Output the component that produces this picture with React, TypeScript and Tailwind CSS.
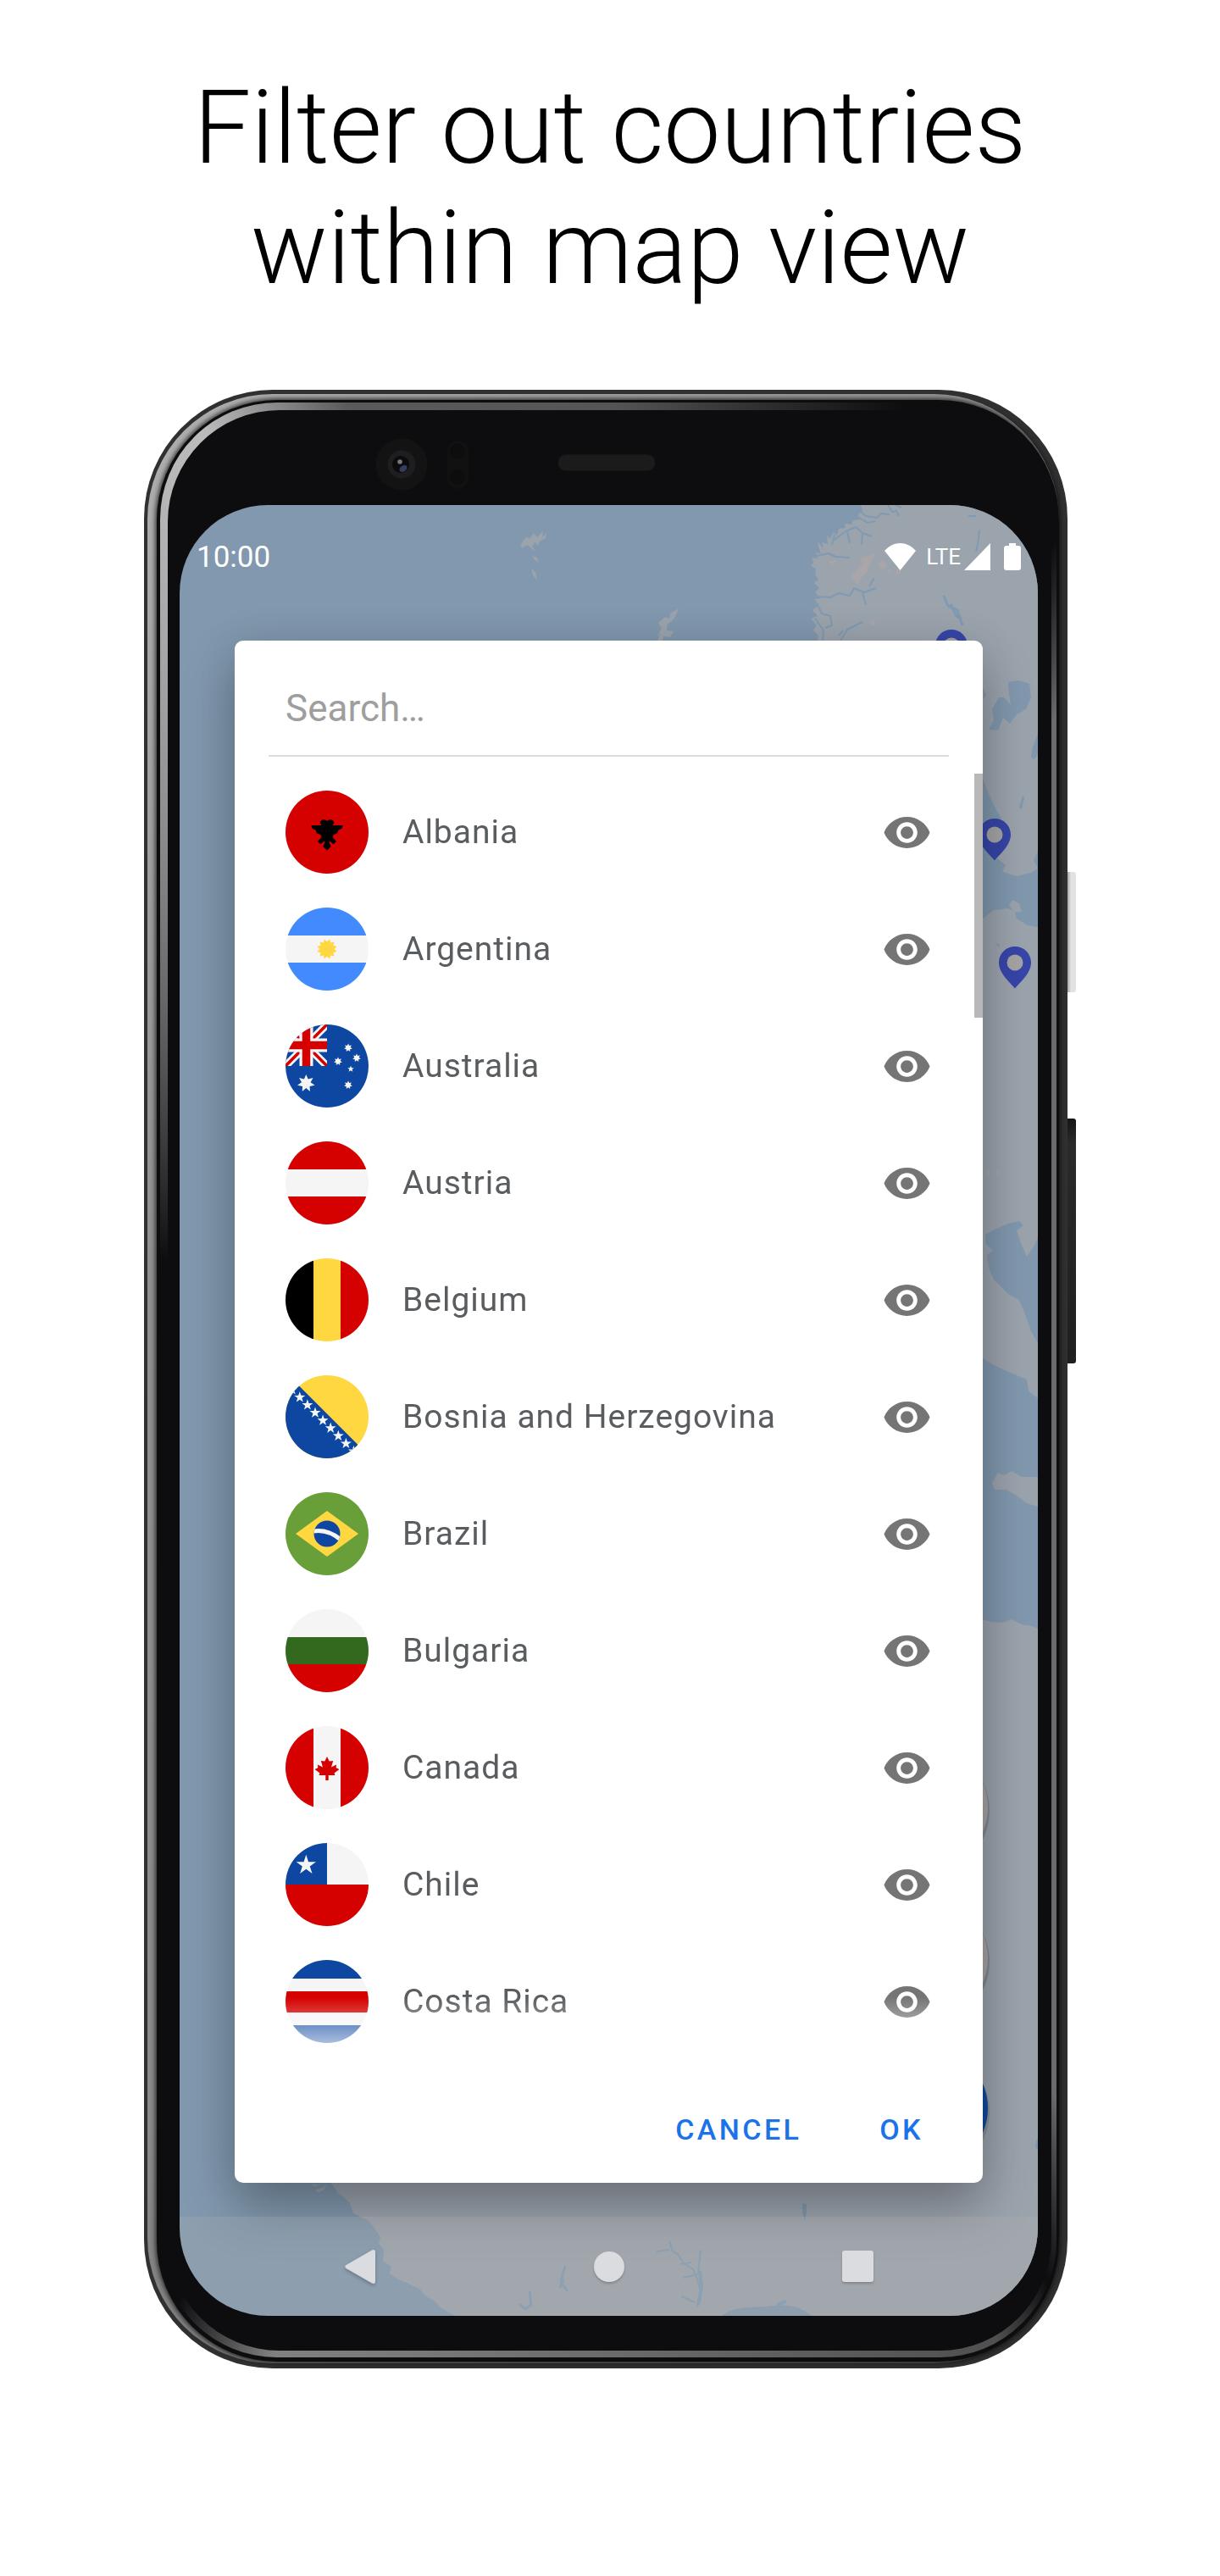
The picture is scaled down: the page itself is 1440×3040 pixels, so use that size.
import { useState, type ReactNode } from 'react';
import { MdVisibility, MdVisibilityOff } from 'react-icons/md';

const RED = '#d50000';
const WHITE = '#f5f5f5';
const BLUE = '#0d47a1';
const YELLOW = '#ffd740';

function starPoints(cx: number, cy: number, r: number, n = 5, inner = 0.4, turn = 0) {
  const pts: string[] = [];
  for (let i = 0; i < n * 2; i++) {
    const rad = i % 2 === 0 ? r : r * inner;
    const a = -Math.PI / 2 + turn + (Math.PI * i) / n;
    pts.push(`${(cx + rad * Math.cos(a)).toFixed(2)},${(cy + rad * Math.sin(a)).toFixed(2)}`);
  }
  return pts.join(' ');
}

function Flag({ children }: { children: ReactNode }) {
  return (
    <svg viewBox="0 0 98 98" aria-hidden="true" className="size-[98px] shrink-0 rounded-full">
      {children}
    </svg>
  );
}

function Rows({ parts }: { parts: [string, number, number][] }) {
  return (
    <>
      {parts.map(([fill, from, to], i) => (
        <rect key={i} x="0" y={from} width="98" height={to - from} fill={fill} />
      ))}
    </>
  );
}

function Columns({ parts }: { parts: [string, number, number][] }) {
  return (
    <>
      {parts.map(([fill, from, to], i) => (
        <rect key={i} x={from} y="0" width={to - from} height="98" fill={fill} />
      ))}
    </>
  );
}

const countries: { name: string; flag: ReactNode }[] = [
  {
    name: 'Albania',
    flag: (
      <>
        <rect width="98" height="98" fill={RED} />
        <path d="M49 36C47 33.500 43 33.500 41.500 36C40.500 38 41 39.500 42.500 41H30.500L31 44L33 45.500L35.500 46.500L37 50.500L41.500 52L42.500 55L38 60L41.300 63.300L46 59.500L46.500 61L44.300 66L49 70.500L53.700 66L51.500 61L52 59.500L56.700 63.300L60 60L55.500 55L56.500 52L61 50.500L62.500 46.500L65 45.500L67 44L67.500 41H55.500C57 39.500 57.500 38 56.500 36C55 33.500 51 33.500 49 36Z" />
      </>
    ),
  },
  {
    name: 'Argentina',
    flag: (
      <>
        <Rows parts={[['#448aff', 0, 33], [WHITE, 33, 65], ['#448aff', 65, 98]]} />
        <polygon points={starPoints(49, 49, 12, 12, 0.72, Math.PI / 12)} fill={YELLOW} />
      </>
    ),
  },
  {
    name: 'Australia',
    flag: (
      <>
        <rect width="98" height="98" fill={BLUE} />
        <clipPath id="canton">
          <rect width="49" height="49" />
        </clipPath>
        <g clipPath="url(#canton)">
          <path d="M0 0L49 49M49 0L0 49" stroke={WHITE} strokeWidth="9" />
          <path d="M0 0L49 49M49 0L0 49" stroke={RED} strokeWidth="3.500" />
          <path d="M24.500 0V49M0 24.500H49" stroke={WHITE} strokeWidth="16" />
          <path d="M24.500 0V49M0 24.500H49" stroke={RED} strokeWidth="9.500" />
        </g>
        <g fill={WHITE}>
          <polygon points={starPoints(24.3, 69.5, 10.5, 7, 0.52)} />
          <polygon points={starPoints(74, 27.5, 5, 7, 0.55)} />
          <polygon points={starPoints(84, 39.5, 5, 7, 0.55)} />
          <polygon points={starPoints(62, 43.5, 5, 7, 0.55)} />
          <polygon points={starPoints(77, 52.5, 4, 5, 0.42)} />
          <polygon points={starPoints(74, 71.5, 5, 7, 0.55)} />
        </g>
      </>
    ),
  },
  { name: 'Austria', flag: <Rows parts={[[RED, 0, 33], [WHITE, 33, 65], [RED, 65, 98]]} /> },
  { name: 'Belgium', flag: <Columns parts={[['#000', 0, 33], [YELLOW, 33, 65], [RED, 65, 98]]} /> },
  {
    name: 'Bosnia and Herzegovina',
    flag: (
      <>
        <rect width="98" height="98" fill={YELLOW} />
        <path d="M0 -3.500L98 94.500V98H0Z" fill={BLUE} />
        {[-1, 0, 1, 2, 3, 4, 5, 6, 7].map((i) => (
          <polygon key={i} points={starPoints(16.8 + i * 9.1, 26 + i * 9.1, 6.8)} fill={WHITE} />
        ))}
      </>
    ),
  },
  {
    name: 'Brazil',
    flag: (
      <>
        <rect width="98" height="98" fill="#689f38" />
        <path d="M12 49L49 22L86 49L49 76Z" fill={YELLOW} />
        <clipPath id="globe">
          <circle cx="49" cy="49" r="15.5" />
        </clipPath>
        <circle cx="49" cy="49" r="15.5" fill={BLUE} />
        <path d="M30 46.500C44 43.500 55 47 66 57" stroke={WHITE} strokeWidth="5" fill="none" clipPath="url(#globe)" />
      </>
    ),
  },
  { name: 'Bulgaria', flag: <Rows parts={[[WHITE, 0, 33], ['#33691e', 33, 65], [RED, 65, 98]]} /> },
  {
    name: 'Canada',
    flag: (
      <>
        <Columns parts={[[RED, 0, 33], [WHITE, 33, 65], [RED, 65, 98]]} />
        <path
          d="M49 36L46.300 41.500L41.800 41L44 48.500L38 45.500L38.300 49.300L34.500 51L40.500 55.500L39.500 58H47.300V64H50.700V58H58.500L57.500 55.500L63.500 51L59.700 49.300L60 45.500L54 48.500L56.200 41L51.700 41.500Z"
          fill={RED}
        />
      </>
    ),
  },
  {
    name: 'Chile',
    flag: (
      <>
        <rect width="98" height="49" fill={WHITE} />
        <rect width="49" height="49" fill={BLUE} />
        <rect y="49" width="98" height="49" fill={RED} />
        <polygon points={starPoints(24.3, 26, 12.3, 5, 0.38)} fill={WHITE} />
      </>
    ),
  },
  {
    name: 'Costa Rica',
    flag: <Rows parts={[[BLUE, 0, 22], [WHITE, 22, 37], [RED, 37, 62], [WHITE, 62, 77], [BLUE, 77, 98]]} />,
  },
];

function Pin({ x, y }: { x: number; y: number }) {
  return (
    <g transform={`translate(${x} ${y})`}>
      <path d="M0 0C-10.500 0 -19 8 -19 19C-19 32 -5 43 0 49.500C5 43 19 32 19 19C19 8 10.500 0 0 0Z" fill="#3746a8" />
      <circle cy="19" r="9.5" fill="#a5a5a5" />
    </g>
  );
}

/* Dimmed map of Europe and the northern coast of Africa. */
function MapBackground() {
  return (
    <svg
      viewBox="212 596 1013 2137"
      preserveAspectRatio="xMidYMid slice"
      aria-hidden="true"
      className="absolute inset-0 size-full"
    >
      <rect x="212" y="596" width="1013" height="2137" fill="#8198ae" />
      <g fill="#9ba3ad">
        <path d="M1016 596L1018 602L1013 607L1014 613L1007 614L1005 619L997 618L998 623L990 624L988 631L983 628L980 636L976 632L977 642L970 640L972 648L965 638L966 646L969 653L963 652L965 659L958 658L960 664L957 668L963 671L962 678L966 684L961 688L967 694L962 699L968 706L961 707L967 714L959 720L965 727L957 730L964 738L960 744L966 750L961 770V1605L1160 1603L1175 1612L1190 1619L1212 1628L1214 1642L1225 1650V596Z" />
        <path d="M1171 1750L1178 1738L1185 1741L1194 1736L1206 1743L1225 1743V1778L1212 1774L1200 1765L1187 1758L1174 1758Z" />
        <path d="M1159 1911L1170 1914L1183 1915L1194 1911L1206 1917L1218 1919L1225 1922V2733H537L521 2724L512 2715L503 2710L495 2701L480 2694L470 2690L460 2683L462 2675L452 2668L453 2655L447 2648L449 2640L441 2628L434 2620L417 2612L413 2600L405 2592L399 2588L392 2578L388 2572L600 2300L900 2000Z" />
        <path d="M614 643L621 634L626 635L630 629L634 634L641 626L640 634L645 629L644 635L637 639L635 644L631 640L628 645L634 653L627 647L622 643L616 647Z" />
        <path d="M628 656L634 658L636 664L631 661Z" />
        <path d="M627 671L632 675L634 684L629 679Z" />
        <path d="M777 735L785 728L790 730L791 724L801 718L797 728L793 733L788 736L787 744L795 745L791 752L783 751L782 757H776L779 748L775 751L781 742Z" />
        <path d="M372 2584L381 2582L385 2578L383 2584L375 2588ZM368 2577L378 2579L370 2580Z" />
      </g>
      {/* Inland water */}
      <g fill="#8198ae">
        <path d="M1190 805L1202 803L1215 807L1217 823L1211 837L1200 843L1192 854L1184 847L1178 862L1167 861L1173 850L1171 837L1179 823L1185 823L1193 832L1191 818Z" />
        <path d="M1225 865L1219 883L1220 897L1225 890ZM1160 812L1164 820L1161 826Z" />
        <path d="M1219 880L1217 893L1220 896L1223 885Z" />
        <path d="M1160 919L1168 939L1177 958L1182 966L1178 1000L1176 1012L1187 1021L1183 1029L1200 1034L1216 1030L1225 1025V1094L1213 1092L1200 1084L1198 1076L1190 1072L1173 1074L1160 1084Z" />
        <path d="M1203 953L1207 939L1209 941L1206 955ZM1225 1004L1220 1015L1225 1025ZM1174 1113L1179 1114L1180 1118Z" />
        <path d="M1163 1457L1174 1451L1190 1444L1203 1441L1208 1446L1200 1452L1205 1467L1212 1483L1220 1471L1225 1460V1585L1217 1571L1210 1551L1203 1534L1190 1527L1173 1510L1167 1496L1165 1481L1172 1476L1163 1467Z" />
        <path d="M852 2733C865 2722 885 2723 905 2722C930 2718 945 2722 958 2733Z" />
        <path d="M947 2600L952 2601L952 2612L950 2621L947 2612Z" />
        <path d="M1223 2526L1225 2524V2537L1222 2534Z" />
      </g>
      <g fill="none" stroke="#7f9ab3" strokeWidth="2" strokeLinejoin="round">
        <path d="M1015 603L1022 609L1035 611L1040 606L1050 607M1014 611L1024 617L1033 615M1048 596L1053 604L1058 603L1061 609M1057 596L1064 599" />
        <path d="M985 637L998 627L1010 622L1018 629L1017 643M1018 629L1029 633M1003 641L1000 627M985 631L982 643" />
        <path d="M964 656L978 653L986 657L1003 658M964 704L980 705L990 700L1003 703L1008 694L1020 699L1034 694M1018 699L1022 714M1026 692L1032 682" />
        <path d="M965 714L970 724L980 727L982 738L974 741M962 730L972 744L971 756M992 756L1000 743L1010 738L1018 734M995 744L990 750" />
        <path d="M1156 626L1154 643L1152 651M1143 609L1152 609" />
        <path d="M1114 703L1119 715L1130 720L1136 738M1122 713L1129 727L1134 730" strokeWidth="3" />
        <path d="M667 2674L662 2693L670 2704M665 2690L661 2700M625 2704L627 2720L620 2725L613 2719" strokeWidth="3" />
        <path d="M790 2645L794 2657L800 2660L807 2671L818 2678L823 2690L826 2700L827 2713L823 2722M775 2657L790 2655M827 2655L824 2685M803 2672L816 2670M804 2710L820 2717M806 2688L824 2684" strokeWidth="2" />
        <path d="M826 2680L828 2700L824 2720M917 2720L928 2716" strokeWidth="4" />
        <path d="M1160 1000L1178 995M1160 1006L1172 1008" strokeWidth="3" />
      </g>
      <g fill="#a9a5a8">
        <path d="M1010 674L1018 665L1015 659L1024 656L1032 652L1030 660L1026 666L1024 674L1018 680L1012 690L1008 684L1004 680ZM978 663L988 660L984 667ZM1035 666L1042 662L1048 666L1043 672Z" />
        <circle cx="1060" cy="675" r="3" />
        <circle cx="1050" cy="674" r="2" />
        <circle cx="1030" cy="735" r="3" />
        <circle cx="1167" cy="1384" r="2" />
        <circle cx="1178" cy="1384" r="2" />
        <path d="M1191 1068L1195 1062L1203 1066L1206 1076L1197 1077Z" fill="#9ba3ad" />
      </g>
      <g>
        <circle cx="1093" cy="2137" r="75" fill="#000" opacity="0.15" />
        <circle cx="1093" cy="2133" r="73" fill="#a8a5a4" />
        <circle cx="1093" cy="2315" r="75" fill="#000" opacity="0.15" />
        <circle cx="1093" cy="2311" r="73" fill="#a8a5a4" />
        <circle cx="1093" cy="2492" r="75" fill="#000" opacity="0.12" />
        <circle cx="1093" cy="2488" r="73" fill="#104b9b" />
      </g>
      <Pin x={1123} y={743} />
      <Pin x={1174} y={966} />
      <Pin x={1198} y={1117} />
    </svg>
  );
}

function StatusBar() {
  return (
    <div className="relative flex h-[160px] items-start justify-between px-5 pt-[37px] text-white">
      <span className="text-[35px] leading-[50px]">10:00</span>
      <div className="flex h-12 items-center">
        <svg viewBox="0 0 37 32" className="mr-3 h-8 w-[37px]" fill="currentColor" aria-label="Wi-Fi">
          <path d="M0 9C11 -3 26 -3 37 9L18.500 32Z" />
        </svg>
        <span className="mr-1 text-[26px] leading-[48px]">LTE</span>
        <svg viewBox="0 0 31 32" className="mr-4 h-8 w-[31px]" fill="currentColor" aria-label="Signal">
          <path d="M31 0V32H0Z" />
        </svg>
        <svg viewBox="0 0 20 32" className="h-8 w-5" fill="currentColor" aria-label="Battery">
          <path d="M6 0H14V3H17Q20 3 20 6V29Q20 32 17 32H3Q0 32 0 29V6Q0 3 3 3H6Z" />
        </svg>
      </div>
    </div>
  );
}

function CountryDialog() {
  const [query, setQuery] = useState('');
  const [hidden, setHidden] = useState<string[]>([]);
  const shown = countries.filter((c) => c.name.toLowerCase().includes(query.toLowerCase()));
  const toggle = (name: string) =>
    setHidden((list) => (list.includes(name) ? list.filter((n) => n !== name) : [...list, name]));

  return (
    <section
      role="dialog"
      aria-label="Countries"
      className="relative mx-[65px] flex flex-col overflow-clip rounded-[10px] bg-white shadow-[0_30px_60px_rgba(0,0,0,0.28),0_0_50px_rgba(0,0,0,0.08)]"
    >
      <div className="mx-10 border-b-2 border-[#dcdcdc] px-5 pt-[52px] pb-[27px]">
        <input
          type="text"
          aria-label="Search countries"
          placeholder="Search…"
          value={query}
          onChange={(e) => setQuery(e.target.value)}
          className="block h-14 w-full bg-transparent text-[44px] leading-[56px] text-[#5f6368] outline-none placeholder:text-[#9e9e9e]"
        />
      </div>

      <div className="relative mt-5 h-[1528px]">
        <ul className="h-full overflow-hidden [mask-image:linear-gradient(to_bottom,black_calc(100%_-_84px),transparent)]">
          {shown.map(({ name, flag }) => (
            <li key={name} className="flex h-[138px] items-center gap-10 px-[60px]">
              <Flag>{flag}</Flag>
              <span className="grow text-[39px] leading-[50px] tracking-wide text-[#5a5d60]">{name}</span>
              <button
                type="button"
                aria-label={`Show ${name}`}
                aria-pressed={!hidden.includes(name)}
                onClick={() => toggle(name)}
                className="text-[#757575]"
              >
                {hidden.includes(name) ? (
                  <MdVisibilityOff className="size-[59px]" />
                ) : (
                  <MdVisibility className="size-[59px]" />
                )}
              </button>
            </li>
          ))}
        </ul>
        <div className="absolute top-0 right-0 h-[288px] w-[10px] bg-[#b8b8b8]" />
      </div>

      <div className="mt-7 flex justify-end gap-7 pr-[38px] pb-[19px] text-[34px] leading-[48px] font-medium tracking-widest text-[#1a73e8]">
        <button type="button" className="h-[88px] px-8">
          CANCEL
        </button>
        <button type="button" className="h-[88px] px-8">
          OK
        </button>
      </div>
    </section>
  );
}

function NavigationBar() {
  return (
    <nav className="relative mt-10 flex h-[117px] items-center justify-between bg-[#bcb8b5]/20 px-[173px] text-[#dadcdf]">
      <button type="button" aria-label="Back" className="flex h-20 w-20 items-center justify-center">
        <svg viewBox="0 0 36 42" className="h-[42px] w-9 drop-shadow-[0_2px_2px_rgba(0,0,0,0.25)]" fill="currentColor">
          <path d="M1.500 19L32 1.500Q36 0 36 4V38Q36 42 32 40.500L1.500 23Q-1 21 1.500 19Z" />
        </svg>
      </button>
      <button type="button" aria-label="Home" className="flex h-20 w-20 items-center justify-center">
        <span className="size-9 rounded-full bg-current shadow-[0_2px_3px_rgba(0,0,0,0.2)]" />
      </button>
      <button type="button" aria-label="Recent apps" className="flex h-20 w-20 items-center justify-center">
        <span className="size-[37px] rounded-[3px] bg-current shadow-[0_2px_3px_rgba(0,0,0,0.2)]" />
      </button>
    </nav>
  );
}

function Sensors() {
  return (
    <div className="absolute inset-x-0 top-0 h-[112px]" aria-hidden="true">
      <svg viewBox="0 0 112 64" className="absolute top-8 left-[245px] h-16 w-[112px]">
        <circle cx="31" cy="32" r="30.500" fill="#131313" />
        <circle cx="31" cy="32" r="16.500" fill="#1e1e21" />
        <circle cx="30" cy="32" r="10" fill="#0b0b0e" />
        <ellipse cx="33" cy="37" rx="5" ry="3.500" transform="rotate(-35 33 37)" fill="#363c5e" />
        <circle cx="29" cy="29" r="2.800" fill="#77777a" />
        <rect x="85" y="4" width="25" height="57" rx="12.500" fill="#111112" />
        <circle cx="97" cy="16" r="9" fill="#0d0d0e" />
        <circle cx="97" cy="47" r="9" fill="#0d0d0e" />
      </svg>
      <div className="absolute top-[52px] left-[460px] h-5 w-[116px] rounded-[10px] border border-[#141414] bg-[#1b1b1b]" />
    </div>
  );
}

export default function App() {
  return (
    <main className="min-h-screen bg-white px-4 pt-20 pb-[245px] font-['Roboto',sans-serif]">
      <h1 className="text-center text-[120px] leading-[142px] font-light text-black">
        Filter out countries
        <br />
        within map view
      </h1>

      <div className="mx-auto mt-24 flex w-full max-w-[1100px]">
        {/* Phone body: metal rim, bright edge, groove, glass edge, glass */}
        <div className="grow rounded-[152px] bg-[#303030] pt-[5px] pr-[10px] pb-[6px] pl-1">
          <div className="rounded-[148px] bg-[linear-gradient(135deg,#b0b0b0,#909090_30%,#8a8a8a_60%,#5a5a5a)] pt-[7px] pb-0.5 pl-[11px]">
            <div className="rounded-[142px] bg-[#0d0d0f] pt-[3px] pr-[3px] pb-[5px] pl-1 shadow-[0_0_5px_2px_rgba(13,13,15,0.7)]">
              <div className="rounded-[138px] bg-[conic-gradient(#555_0deg,#333_8deg,#0d0d0f_17deg,#0d0d0f_28deg,#6a6a6a_34deg,#6a6a6a_148deg,#0d0d0f_154deg,#505050_158deg,#777_190deg,#808080_199deg,#0d0d0f_205deg,#0d0d0f_285deg,#888_320deg,#b8b8b8_334deg,#bbb_337deg,#5a5a5a_345deg,#555_360deg)] pt-[9px] pr-[6px] pb-2 pl-[9px]">
                <div className="relative rounded-[132px] bg-[#0d0d0f] pt-[112px] pr-4 pb-[41px] pl-[14px]">
                  <Sensors />
                  <div className="relative flex flex-col overflow-clip rounded-[104px]">
                    <MapBackground />
                    <StatusBar />
                    <CountryDialog />
                    <NavigationBar />
                  </div>
                </div>
              </div>
            </div>
          </div>
        </div>
        {/* Power and volume keys */}
        <div className="flex w-[10px] shrink-0 flex-col gap-[149px] pt-[569px]" aria-hidden="true">
          <div className="h-[142px] rounded-r-[3px] bg-linear-to-r from-[#a8a8a8] to-[#e2e2e2] to-40%" />
          <div className="h-[289px] rounded-r-[3px] bg-linear-to-b from-[#151515] via-[#2a2a2a] via-10% to-[#1f1f1f]" />
        </div>
      </div>
    </main>
  );
}
